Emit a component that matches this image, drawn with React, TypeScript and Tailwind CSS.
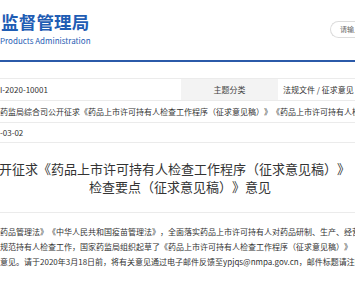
import React from 'react';

const cjk = { fontFamily: '"Noto Sans CJK SC", "Noto Sans", sans-serif' };

export default function App() {
  return (
    <div
      className="relative w-[355px] h-[290px] overflow-hidden bg-white text-[#333] [text-spacing-trim:space-all]"
      style={cjk}
    >
      {/* Header */}
      <div className="flex h-[60px]">
        <div className="pt-[11px] pl-[1px] text-[#1f5db4]">
          <div className="text-[17.5px] font-bold leading-[22px] tracking-[0.2px] whitespace-nowrap">监督管理局</div>
          <div className="ml-[-1px] mt-[3px] text-[8px] leading-[10px] whitespace-nowrap">Products Administration</div>
        </div>
        <div className="ml-auto pt-[21px]">
          <div className="flex h-[17px] w-[40px] items-center rounded-l-full border border-r-0 border-[#dcdcdc] pl-[9px] text-[7px] text-[#666] whitespace-nowrap overflow-hidden mr-[-15px]">
            请输入关键字
          </div>
        </div>
      </div>
      <div className="h-[2px] bg-[#2b5aa9]" />

      {/* Info table */}
      <div className="mt-[16px] text-[8px]">
        <div className="flex h-[22px] border-t border-[#ebebeb]">
          <div className="flex w-[181px] items-center whitespace-nowrap">I-2020-10001</div>
          <div className="flex w-[97px] items-center justify-center bg-[#f3f3f3] text-[#444]">主题分类</div>
          <div className="flex items-center pl-[5px] whitespace-nowrap">法规文件 / 征求意见</div>
        </div>
        <div className="flex h-[22px] items-center border-t border-[#ebebeb] whitespace-nowrap">
          药监局综合司公开征求《药品上市许可持有人检查工作程序（征求意见稿）》《药品上市许可持有人检查要点（征求意见稿）》意见
        </div>
        <div className="flex h-[21px] items-center border-y border-[#ebebeb] whitespace-nowrap">-03-02</div>
      </div>

      {/* Title */}
      <div className="flex h-[70px] flex-col justify-center border-b border-[#ebebeb] text-[13px] leading-[18px] text-[#333]">
        <div className="ml-[-118px] whitespace-nowrap">
          国家药监局综合司公开征求《药品上市许可持有人检查工作程序（征求意见稿）》《药品上市许可持有人
        </div>
        <div className="w-[360px] text-center whitespace-nowrap">检查要点（征求意见稿）》意见</div>
      </div>

      {/* Body */}
      <div className="pt-[11px] text-[8px] leading-[15px] text-[#333]">
        <div className="whitespace-nowrap">
          药品管理法》《中华人民共和国疫苗管理法》，全面落实药品上市许可持有人对药品研制、生产、经营
        </div>
        <div className="whitespace-nowrap">
          规范持有人检查工作，国家药监局组织起草了《药品上市许可持有人检查工作程序（征求意见稿）》
        </div>
        <div className="whitespace-nowrap">
          意见。请于2020年3月18日前，将有关意见通过电子邮件反馈至ypjqs@nmpa.gov.cn，邮件标题请注明
        </div>
      </div>
    </div>
  );
}
